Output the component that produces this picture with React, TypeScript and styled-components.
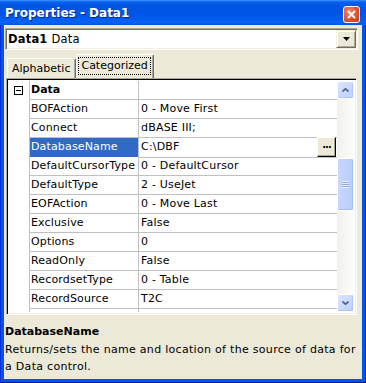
import React from "react";
import styled, { createGlobalStyle } from "styled-components";

const rows: { name: string; value: string; selected?: boolean }[] = [
  { name: "BOFAction", value: "0 - Move First" },
  { name: "Connect", value: "dBASE III;" },
  { name: "DatabaseName", value: "C:\\DBF", selected: true },
  { name: "DefaultCursorType", value: "0 - DefaultCursor" },
  { name: "DefaultType", value: "2 - UseJet" },
  { name: "EOFAction", value: "0 - Move Last" },
  { name: "Exclusive", value: "False" },
  { name: "Options", value: "0" },
  { name: "ReadOnly", value: "False" },
  { name: "RecordsetType", value: "0 - Table" },
  { name: "RecordSource", value: "T2C" },
];

function App() {
  return (
    <>
      <GlobalStyle />
      <Window>
        <TitleBar>
          <Title>Properties - Data1</Title>
          <CloseButton>
            <svg width="9" height="9" viewBox="0 0 9 9">
              <path d="M1 1 L8 8 M8 1 L1 8" stroke="#fff" strokeWidth="2" />
            </svg>
          </CloseButton>
        </TitleBar>
        <Frame>
          <Body>
            <Combo>
              <ComboText>
                <b>Data1</b> Data
              </ComboText>
              <DropButton>
                <svg width="7" height="4" viewBox="0 0 7 4">
                  <path d="M0 0 H7 L3.5 4 Z" fill="#000" />
                </svg>
              </DropButton>
            </Combo>
            <TabStrip>
              <Tab>Alphabetic</Tab>
              <Tab $active>
                <Focus>Categorized</Focus>
              </Tab>
            </TabStrip>
            <Grid>
              <List>
                <Row>
                  <Gutter>
                    <Toggle>
                      <svg width="5" height="1" viewBox="0 0 5 1">
                        <rect width="5" height="1" fill="#000" />
                      </svg>
                    </Toggle>
                  </Gutter>
                  <NameCell $bold>Data</NameCell>
                  <ValueCell />
                </Row>
                {rows.map((r) => (
                  <Row key={r.name}>
                    <Gutter />
                    <NameCell $selected={r.selected}>{r.name}</NameCell>
                    <ValueCell>
                      <span>{r.value}</span>
                      {r.selected && <DotsButton>...</DotsButton>}
                    </ValueCell>
                  </Row>
                ))}
                <Row>
                  <Gutter />
                  <NameCell />
                  <ValueCell />
                </Row>
              </List>
              <ScrollBar>
                <ScrollButton>
                  <svg width="7" height="4" viewBox="0 0 7 4">
                    <path d="M0.5 3.5 L3.5 0.8 L6.5 3.5" stroke="#4d6185" strokeWidth="1.6" fill="none" />
                  </svg>
                </ScrollButton>
                <Track>
                  <Thumb $offset={59}>
                    <Grip />
                  </Thumb>
                </Track>
                <ScrollButton>
                  <svg width="7" height="4" viewBox="0 0 7 4">
                    <path d="M0.5 0.5 L3.5 3.2 L6.5 0.5" stroke="#4d6185" strokeWidth="1.6" fill="none" />
                  </svg>
                </ScrollButton>
              </ScrollBar>
            </Grid>
            <Description>
              <DescTitle>DatabaseName</DescTitle>
              <DescText>
                Returns/sets the name and location of the source of data for a Data control.
              </DescText>
            </Description>
          </Body>
        </Frame>
      </Window>
    </>
  );
}

export default App;

const GlobalStyle = createGlobalStyle`
  html, body {
    margin: 0;
    padding: 0;
  }
  body {
    width: 366px;
    height: 383px;
    overflow: hidden;
    font-family: "DejaVu Sans", Verdana, sans-serif;
    font-size: 11px;
    letter-spacing: 0.3px;
  }
`;

const Window = styled.div`
  width: 366px;
  height: 383px;
  display: flex;
  flex-direction: column;
  background: #0055e5;
`;

const TitleBar = styled.div`
  height: 25px;
  box-sizing: border-box;
  display: flex;
  align-items: flex-start;
  justify-content: space-between;
  padding: 5px 6px 0 5px;
  background: linear-gradient(
    to bottom,
    #3d95ff 0px,
    #0a5ff0 2px,
    #0054e3 6px,
    #0056e8 16px,
    #0862f5 22px,
    #0057ea 25px
  );
`;

const Title = styled.div`
  color: #fff;
  font-family: "DejaVu Sans", Verdana, sans-serif;
  font-weight: bold;
  font-size: 12px;
  letter-spacing: 0;
  line-height: 17px;
  text-shadow: 1px 1px 0 #0a2a8a;
`;

const CloseButton = styled.div`
  width: 17px;
  height: 17px;
  margin-top: 1px;
  box-sizing: border-box;
  border: 1px solid #fff;
  border-radius: 3px;
  background: radial-gradient(circle at 35% 30%, #f08a6a 0%, #e2542e 50%, #c83c1c 100%);
  display: flex;
  align-items: center;
  justify-content: center;
`;

const Frame = styled.div`
  flex: 1;
  display: flex;
  padding: 0 4px 4px 4px;
  background: #0055e5;
  box-shadow: inset 1px 0 #0831d9, inset -1px 0 #001ea0, inset 0 -1px #001ea0;
`;

const Body = styled.div`
  flex: 1;
  display: flex;
  flex-direction: column;
  background: #ece9d8;
`;

const Combo = styled.div`
  margin: 3px 4px 0 1px;
  height: 22px;
  box-sizing: border-box;
  display: flex;
  align-items: center;
  background: #fff;
  border-top: 1px solid #aca899;
  border-left: 1px solid #aca899;
  border-right: 1px solid #fff;
  border-bottom: 1px solid #fff;
  box-shadow: inset 1px 1px #716f64, inset -1px -1px #f1efe2;
`;

const ComboText = styled.div`
  flex: 1;
  padding-left: 2px;
  line-height: 18px;
  font-size: 11.5px;
  letter-spacing: 0.2px;
  color: #000;
`;

const DropButton = styled.div`
  width: 20px;
  height: 18px;
  margin-right: 1px;
  box-sizing: border-box;
  display: flex;
  align-items: center;
  justify-content: center;
  background: #ece9d8;
  border-top: 1px solid #f1efe2;
  border-left: 1px solid #f1efe2;
  border-right: 1px solid #716f64;
  border-bottom: 1px solid #716f64;
  box-shadow: inset 1px 1px #fff, inset -1px -1px #aca899;
`;

const TabStrip = styled.div`
  height: 25px;
  margin-top: 3px;
  padding-left: 3px;
  display: flex;
  align-items: flex-end;
`;

const Tab = styled.div<{ $active?: boolean }>`
  height: ${(p) => (p.$active ? 24 : 20)}px;
  box-sizing: border-box;
  padding: ${(p) => (p.$active ? "3px 3px 0 2px" : "2px 5px 0 4px")};
  background: #ece9d8;
  border-top: 1px solid #fff;
  border-left: 1px solid #fff;
  border-right: 1px solid #716f64;
  border-radius: 2px 2px 0 0;
  box-shadow: inset -1px 0 #aca899;
  line-height: 15px;
  letter-spacing: 0;
  white-space: nowrap;
  color: #000;
`;

const Focus = styled.span`
  display: inline-block;
  padding: 0 2px;
  line-height: 16px;
  outline: 1px dotted #000;
  outline-offset: 0;
`;

const Grid = styled.div`
  margin: 0 5px 0 2px;
  height: 237px;
  box-sizing: border-box;
  display: flex;
  background: #fff;
  border-top: 1px solid #aca899;
  border-left: 1px solid #aca899;
  border-right: 1px solid #fff;
  border-bottom: 1px solid #fff;
  box-shadow: inset 1px 1px #000, inset -1px -1px #f1efe2;
`;

const List = styled.div`
  flex: 1;
  margin: 2px 0 2px 1px;
  overflow: hidden;
`;

const Row = styled.div`
  display: grid;
  grid-template-columns: 21px 110px 1fr;
  height: 19px;
`;

const Gutter = styled.div`
  display: flex;
  justify-content: center;
  padding-top: 5px;
  box-sizing: border-box;
`;

const Toggle = styled.div`
  width: 9px;
  height: 9px;
  box-sizing: border-box;
  border: 1px solid #000;
  display: flex;
  align-items: center;
  justify-content: center;
`;

const NameCell = styled.div<{ $selected?: boolean; $bold?: boolean }>`
  box-sizing: border-box;
  border-left: 1px solid #c0c0c0;
  border-right: 1px solid #c0c0c0;
  border-bottom: 1px solid #c0c0c0;
  padding-left: 1px;
  line-height: 18px;
  white-space: nowrap;
  overflow: hidden;
  letter-spacing: ${(p) => (p.$bold ? "0" : "0.15px")};
  font-weight: ${(p) => (p.$bold ? "bold" : "normal")};
  background: ${(p) => (p.$selected ? "#316ac5" : "#fff")};
  color: ${(p) => (p.$selected ? "#fff" : "#000")};
`;

const ValueCell = styled.div`
  box-sizing: border-box;
  border-bottom: 1px solid #c0c0c0;
  padding-left: 2px;
  line-height: 18px;
  display: flex;
  justify-content: space-between;
  white-space: nowrap;
  letter-spacing: 0.2px;
  color: #000;
`;

const DotsButton = styled.div`
  width: 19px;
  height: 20px;
  margin: -1px 1px 0 0;
  box-sizing: border-box;
  background: #ece9d8;
  border-top: 1px solid #fff;
  border-left: 1px solid #fff;
  border-right: 1px solid #000;
  border-bottom: 1px solid #000;
  box-shadow: inset -1px -1px #aca899;
  font-weight: bold;
  font-size: 10px;
  line-height: 14px;
  text-align: center;
  letter-spacing: -1px;
`;

const ScrollBar = styled.div`
  width: 17px;
  margin: 2px 2px 2px 0;
  display: flex;
  flex-direction: column;
  background: linear-gradient(to right, #f1f0ea, #fdfdfb);
`;

const ScrollButton = styled.div`
  height: 18px;
  box-sizing: border-box;
  display: flex;
  align-items: center;
  justify-content: center;
  border: 1px solid #fff;
  border-radius: 2px;
  background: linear-gradient(to bottom right, #dbe6fe, #bccffb);
  box-shadow: inset -1px -1px #aec4f5;
`;

const Track = styled.div`
  flex: 1;
  display: flex;
  flex-direction: column;
`;

const Thumb = styled.div<{ $offset: number }>`
  margin-top: ${(p) => p.$offset}px;
  height: 53px;
  box-sizing: border-box;
  border: 1px solid #fff;
  border-radius: 2px;
  background: linear-gradient(to right, #c8d8fd, #b8cdfb);
  box-shadow: inset -1px -1px #a4bcf2;
  display: flex;
  align-items: center;
  justify-content: center;
`;

const Grip = styled.div`
  width: 7px;
  height: 7px;
  background: repeating-linear-gradient(to bottom, #eef3fe 0 1px, #8ca8e8 1px 2px);
`;

const Description = styled.div`
  flex: 1;
  padding: 8px 0 0 1px;
  color: #000;
`;

const DescTitle = styled.div`
  font-weight: bold;
  letter-spacing: 0;
  line-height: 18px;
`;

const DescText = styled.div`
  line-height: 17px;
`;
